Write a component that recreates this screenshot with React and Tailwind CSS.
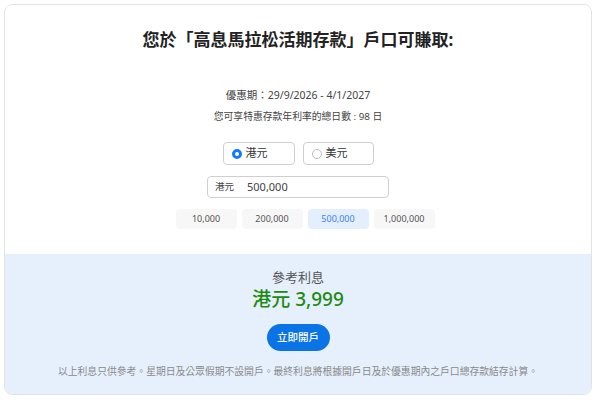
export default function App() {
  const font = { fontFamily: '"Noto Sans", "Noto Sans CJK TC", sans-serif' };
  const presets = ["10,000", "200,000", "500,000", "1,000,000"];
  return (
    <div className="w-[600px] h-[400px] bg-white p-[4px]" style={font}>
      <div className="w-[588px] h-[391px] border border-[#e3e3e3] rounded-[8px] overflow-hidden flex flex-col">
        <div className="h-[249px] bg-white flex flex-col items-center pt-[23px]">
          <div className="text-[17px] leading-[24px] font-bold text-[#222]">您於「高息馬拉松活期存款」戶口可賺取:</div>
          <div className="mt-[35px] text-[10.5px] leading-[16px] text-[#444]">優惠期：29/9/2026 - 4/1/2027</div>
          <div className="mt-[6px] text-[9.8px] leading-[16px] text-[#444]">您可享特惠存款年利率的總日數 : 98 日</div>
          <div className="mt-[17px] flex gap-[8px]">
            <div className="w-[72px] h-[23px] border border-[#cfcfcf] rounded-[4px] flex items-center pl-[8px] gap-[4px]">
              <span className="w-[10px] h-[10px] rounded-full border-[3px] border-[#1677ff] bg-white"></span>
              <span className="text-[11px] text-[#333]">港元</span>
            </div>
            <div className="w-[71px] h-[23px] border border-[#cfcfcf] rounded-[4px] flex items-center pl-[8px] gap-[4px]">
              <span className="w-[10px] h-[10px] rounded-full border border-[#bbb] bg-white"></span>
              <span className="text-[11px] text-[#333]">美元</span>
            </div>
          </div>
          <div className="mt-[11px] w-[182px] h-[22px] border border-[#cfcfcf] rounded-[4px] flex items-center pl-[7px]">
            <span className="text-[9.5px] text-[#444] w-[32px]">港元</span>
            <span className="text-[11px] text-[#444]">500,000</span>
          </div>
          <div className="mt-[11px] ml-[14px] flex gap-[5px]">
            {presets.map((p, i) => (
              <div
                key={p}
                className={
                  i === 2
                    ? "w-[61px] h-[20px] rounded-[4px] bg-[#e4effd] text-[#3b82f6] text-[9px] flex items-center justify-center"
                    : "w-[61px] h-[20px] rounded-[4px] bg-[#f7f7f7] text-[#555] text-[9px] flex items-center justify-center"
                }
              >
                {p}
              </div>
            ))}
          </div>
        </div>
        <div className="flex-1 bg-[#e6f0fc] flex flex-col items-center pt-[14px]">
          <div className="text-[13px] leading-[18px] text-[#555]">參考利息</div>
          <div className="mt-[1px] text-[19px] leading-[24px] text-[#1f8a12] font-medium">港元 3,999</div>
          <div className="mt-[13px] w-[63px] h-[27px] rounded-full bg-[#0a73e6] text-white text-[10.5px] font-medium flex items-center justify-center">立即開戶</div>
          <div className="mt-[14px] text-[9.8px] leading-[14px] text-[#8a8a8a]">以上利息只供參考。星期日及公眾假期不設開戶。最終利息將根據開戶日及於優惠期內之戶口總存款結存計算。</div>
        </div>
      </div>
    </div>
  );
}
